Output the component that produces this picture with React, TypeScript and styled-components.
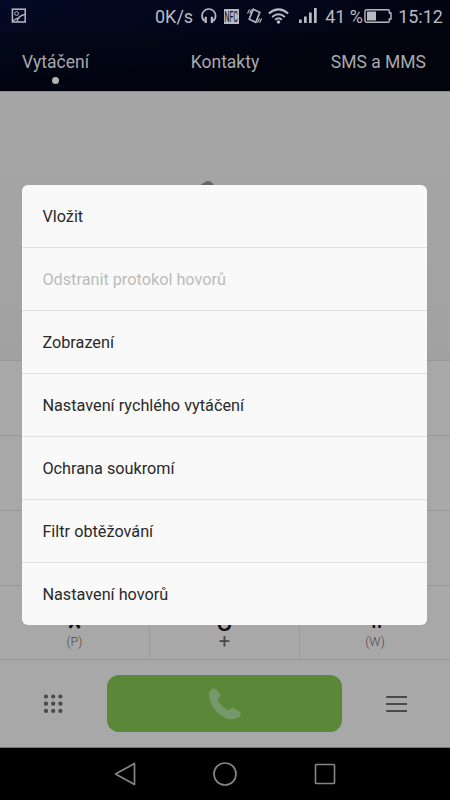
import React from "react";
import styled, { createGlobalStyle } from "styled-components";

const GlobalStyle = createGlobalStyle`
  * { box-sizing: border-box; }
  body { margin: 0; background: #000; font-family: Roboto, sans-serif; }
`;

const Phone = styled.div`
  position: relative;
  display: flex;
  flex-direction: column;
  width: 450px;
  height: 800px;
  overflow: hidden;
  background: #a8a8a8;
`;

const Header = styled.header`
  flex: 0 0 91px;
  background: linear-gradient(90deg, rgba(0, 2, 10, 0), rgba(2, 2, 10, 0.75)),
    linear-gradient(180deg, #030a26 0, #030922 31px, #02071a 32px, #01040f 91px);
`;

const StatusBar = styled.div`
  display: flex;
  align-items: center;
  height: 32px;
  padding: 0 7px 0 11px;
  color: #b9bbc4;
  font-size: 18px;
  line-height: 33px;
  white-space: nowrap;
`;

const StatusText = styled.span<{ $left: number; $width: number }>`
  flex: 0 0 ${(p) => p.$width}px;
  margin-left: ${(p) => p.$left}px;
`;

const StatusIcon = styled.svg<{ $left?: number }>`
  flex: none;
  display: block;
  margin-left: ${(p) => p.$left ?? 0}px;
`;

const NfcBadge = styled.span`
  flex: 0 0 15px;
  height: 15px;
  margin-left: 7px;
  overflow: hidden;
  background: #b9bbc4;
  color: #050a20;
  font-size: 14px;
  font-weight: 400;
  line-height: 16px;
`;

const NfcText = styled.span`
  display: block;
  width: 28px;
  transform: scaleX(0.5);
  transform-origin: 0 0;
  padding-left: 1px;
`;

const Tabs = styled.nav`
  display: grid;
  grid-template-columns: 1fr auto 1fr;
  padding: 20px 24px 0 22px;
`;

const Tab = styled.div`
  display: flex;
  flex-direction: column;
  align-items: center;
  gap: 4px;
  color: #a9a9ac;
  font-size: 17.5px;
  line-height: 21px;
  &:first-child { justify-self: start; }
  &:nth-child(2) { padding-left: 2px; }
  &:last-child { justify-self: end; }
`;

const TabDot = styled.i`
  width: 7px;
  height: 7px;
  border-radius: 50%;
  background: #b4b4b6;
`;

const CallLog = styled.section`
  flex: 0 0 269px;
  padding: 89px 0 0 199px;
  border-top: 1px solid #8f8f8f;
  background: linear-gradient(#a6a6a6, #a1a1a1);
`;

const Keypad = styled.section`
  display: grid;
  grid-template-columns: 150px 150px 150px;
  grid-template-rows: repeat(3, 75px) 74px;
  flex: 0 0 300px;
  border-bottom: 1px solid #999;
`;

const Key = styled.div`
  display: flex;
  flex-direction: column;
  align-items: center;
  border-top: 1px solid #979797;
  border-right: 1px solid #9b9b9b;
  &:nth-child(3n) { border-right: 0; }
`;

const KeySymbol = styled.span<{ $top: number; $size: number; $upright?: boolean }>`
  height: 47px;
  padding-top: ${(p) => p.$top}px;
  color: #111;
  font-size: ${(p) => p.$size}px;
  font-weight: ${(p) => (p.$upright ? 500 : 400)};
  line-height: 32px;
  transform: ${(p) => (p.$upright ? "skewX(9deg)" : "none")};
`;

const KeyHint = styled.span<{ $plus?: boolean }>`
  color: #494949;
  font-size: ${(p) => (p.$plus ? 20 : 12.5)}px;
  font-weight: ${(p) => (p.$plus ? 400 : 300)};
  line-height: ${(p) => (p.$plus ? 16 : 17)}px;
`;

const ActionBar = styled.footer`
  display: grid;
  grid-template-columns: 107.4px 235px 107.6px;
  align-items: center;
  flex: 0 0 88px;
  border-bottom: 1px solid #777;
`;

const ActionIcon = styled.svg`
  display: block;
  justify-self: center;
`;

const CallButton = styled.button`
  display: flex;
  align-items: center;
  justify-content: center;
  height: 57.5px;
  border: 0;
  border-radius: 12px;
  background: #5b8739;
`;

const NavBar = styled.nav`
  display: flex;
  justify-content: center;
  align-items: center;
  gap: 76px;
  flex: 0 0 52px;
  background: #000;
`;

const Menu = styled.ul`
  position: absolute;
  top: 185px;
  left: 22.4px;
  width: 405px;
  height: 440px;
  margin: 0;
  padding: 0;
  overflow: hidden;
  list-style: none;
  border-radius: 6px;
  background: #f9f9f9;
`;

const MenuItem = styled.li<{ $disabled?: boolean }>`
  height: 63px;
  padding-left: 20px;
  border-bottom: 1px solid #e1e1e1;
  color: ${(p) => (p.$disabled ? "#bcbcbc" : "#292929")};
  font-size: 16.25px;
  line-height: 64px;
  &:last-child { border-bottom: 0; }
`;

const items = [
  "Vložit",
  "Odstranit protokol hovorů",
  "Zobrazení",
  "Nastavení rychlého vytáčení",
  "Ochrana soukromí",
  "Filtr obtěžování",
  "Nastavení hovorů",
];

const handset =
  "M2 2 C5-.5 7 .5 8.5 3 L12 8 Q9.5 9 9 11.5 Q11 18 19 22 Q22 22 23 19 L31 24 Q33 27 30 29.5 Q21 34 11 27 Q0 18 0 6 Q0 3 2 2Z";

const ink = "#b9bbc4";

export default function App() {
  return (
    <>
      <GlobalStyle />
      <Phone>
        <Header>
          <StatusBar>
            <StatusIcon width="16" height="16" viewBox="0 0 16 16" fill="none" stroke={ink} strokeWidth="1.5">
              <rect x="1.4" y="1.2" width="12.8" height="12.8" />
              <circle cx="5.6" cy="5.5" r="1.9" strokeWidth="1" />
              <path d="M6 14 Q7 7.5 14 6.5 M2 12.8 L6.5 10" strokeWidth="1.3" />
            </StatusIcon>
            <StatusText $left={128} $width={38}>0K/s</StatusText>
            <StatusIcon $left={8} width="16" height="16" viewBox="0 0 16 16" fill="none" stroke={ink}>
              <path d="M3.6 13 Q1 11.5 1 7.8 A6.8 6.8 0 0 1 14.6 7.8 Q14.6 11.5 12 13" strokeWidth="1.7" />
              <path d="M4.7 8.7 V15 M10.9 8.7 V15" strokeWidth="2.3" />
            </StatusIcon>
            <NfcBadge><NfcText>NFC</NfcText></NfcBadge>
            <StatusIcon $left={8} width="15" height="16" viewBox="0 0 15 16" fill="none" stroke={ink}>
              <path d="M6.3 1.2 L12.8 4.4 L8.8 14.4 L2.2 11.2Z" strokeWidth="1.6" />
              <path d="M.5 5.5 L2.5 1.5 M2.8 5.5 L4.5 1.5 M10.5 14.8 L12.5 10.5 M12.7 14.8 L14.5 10.5" strokeWidth="1.1" />
            </StatusIcon>
            <StatusIcon $left={6} width="21" height="16" viewBox="0 0 21 16" fill="none" stroke={ink} strokeWidth="2">
              <path d="M.8 5.4 Q10.5-2.6 20.2 5.4 M4.1 8.9 Q10.5 3.6 16.9 8.9 M7.1 11.8 Q10.5 8.6 13.9 11.8" />
              <circle cx="10.5" cy="14" r="1.8" fill={ink} stroke="none" />
            </StatusIcon>
            <StatusIcon $left={10} width="19" height="16" viewBox="0 0 19 16" fill={ink}>
              <path d="M0 11.5h2.7v3.5H0z M5 8.5h2.7v6.5H5z M10 4.5h2.7v10.5H10z M15 0h2.7v15H15z" />
            </StatusIcon>
            <StatusText $left={7} $width={38}>41 %</StatusText>
            <StatusIcon $left={1} width="28" height="16" viewBox="0 0 28 16" fill="none" stroke={ink} strokeWidth="1.4">
              <path d="M3 1.7H24Q25.3 1.7 25.3 3V5H27V11H25.3V13Q25.3 14.3 24 14.3H3Q1 14.3 1 12.5V3.5Q1 1.7 3 1.7Z" />
              <path d="M3 3.5H12V12.5H3Z" fill={ink} stroke="none" />
            </StatusIcon>
            <StatusText $left={6} $width={44}>15:12</StatusText>
          </StatusBar>
          <Tabs>
            <Tab>Vytáčení<TabDot /></Tab>
            <Tab>Kontakty</Tab>
            <Tab>SMS a MMS</Tab>
          </Tabs>
        </Header>
        <CallLog>
          <svg width="32" height="32" viewBox="0 0 32 32"><path d="M0 5L6 1Q11-2 15 4L22 12 12 20Z" fill="#656565" /></svg>
        </CallLog>
        <Keypad>
          {Array.from({ length: 9 }, (_, i) => <Key key={i} />)}
          <Key><KeySymbol $top={26} $size={40}>*</KeySymbol><KeyHint>(P)</KeyHint></Key>
          <Key><KeySymbol $top={19} $size={31}>0</KeySymbol><KeyHint $plus>+</KeyHint></Key>
          <Key><KeySymbol $top={16} $size={30} $upright>#</KeySymbol><KeyHint>(W)</KeyHint></Key>
        </Keypad>
        <ActionBar>
          <ActionIcon width="20" height="20" viewBox="0 0 20 20" fill="#494949">
            {[2.5, 9.7, 16.9].map((y) => [2, 9.2, 16.4].map((x) => <circle key={`${x}-${y}`} cx={x} cy={y} r="2.1" />))}
          </ActionIcon>
          <CallButton aria-label="Call">
            <svg width="32" height="32" viewBox="0 0 32 32"><path d={handset} fill="#76986a" /></svg>
          </CallButton>
          <ActionIcon width="22" height="18" viewBox="0 0 22 18" stroke="#494949" strokeWidth="1.9">
            <path d="M1.2 2H22M1.2 9H22M1.2 16H22" />
          </ActionIcon>
        </ActionBar>
        <NavBar>
          <svg width="24" height="24" viewBox="0 0 24 24" fill="none" stroke="#858585" strokeWidth="1.7" strokeLinejoin="round"><path d="M2.5 12L21.5 1.5V22.5Z" /></svg>
          <svg width="24" height="24" viewBox="0 0 24 24" fill="none" stroke="#858585" strokeWidth="1.7"><circle cx="12" cy="12" r="11" /></svg>
          <svg width="24" height="24" viewBox="0 0 24 24" fill="none" stroke="#858585" strokeWidth="1.6"><rect x="2.5" y="2.5" width="19" height="19" rx=".7" /></svg>
        </NavBar>
        <Menu>
          {items.map((item, i) => <MenuItem key={item} $disabled={i === 1}>{item}</MenuItem>)}
        </Menu>
      </Phone>
    </>
  );
}
